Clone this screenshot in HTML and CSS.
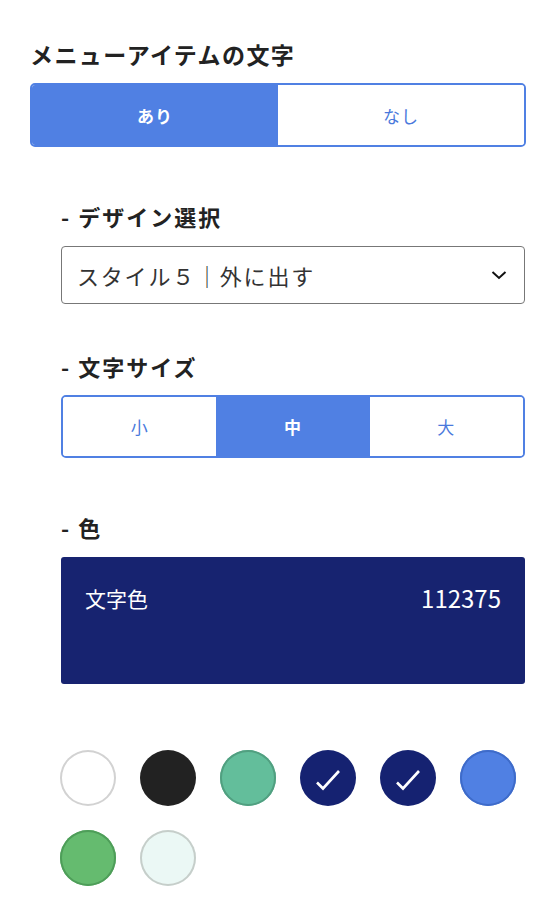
FILE: index.html
```html
<!DOCTYPE html>
<html lang="ja">
<head>
    <meta charset="UTF-8">
    <meta name="viewport" content="width=device-width, initial-scale=1.0">
    <title>メニューアイテムの文字</title>
    <link rel="stylesheet" href="styles.css">
</head>
<body>
    <div class="panel">
        <h2 class="panel-title">メニューアイテムの文字</h2>
        <div class="segmented">
            <button class="segment is-active">あり</button>
            <button class="segment">なし</button>
        </div>

        <div class="sub">
            <h3 class="sub-title">- デザイン選択</h3>
            <div class="select">
                <span class="select-value">スタイル５｜外に出す</span>
                <svg class="select-arrow" width="16" height="10" viewBox="0 0 16 10">
                    <path d="M1.5 2 L8 8 L14.5 2" fill="none" stroke="#111" stroke-width="2"/>
                </svg>
            </div>

            <h3 class="sub-title sub-title-near">- 文字サイズ</h3>
            <div class="segmented segmented-3">
                <button class="segment">小</button>
                <button class="segment is-active">中</button>
                <button class="segment">大</button>
            </div>

            <h3 class="sub-title">- 色</h3>
            <div class="color-preview">
                <span>文字色</span>
                <span class="color-code">112375</span>
            </div>

            <div class="swatches">
                <span class="swatch swatch-white"></span>
                <span class="swatch swatch-black"></span>
                <span class="swatch swatch-teal"></span>
                <span class="swatch swatch-navy">
                    <svg width="56" height="56" viewBox="0 0 56 56"><path d="M17 32.5 L23 38.5 L39 21" fill="none" stroke="#fff" stroke-width="2.6"/></svg>
                </span>
                <span class="swatch swatch-navy">
                    <svg width="56" height="56" viewBox="0 0 56 56"><path d="M17 32.5 L23 38.5 L39 21" fill="none" stroke="#fff" stroke-width="2.6"/></svg>
                </span>
                <span class="swatch swatch-blue"></span>
                <span class="swatch swatch-green"></span>
                <span class="swatch swatch-mint"></span>
            </div>
        </div>
    </div>
</body>
</html>
```

FILE: styles.css
```css
body {
    margin: 0;
    font-family: "Noto Sans CJK JP", "Noto Sans", sans-serif;
    color: #222;
    background: #fff;
}

.panel {
    padding: 39px 22px 20px 30px;
}

/* Headings */
.panel-title {
    margin: 0 0 13px;
    font-size: 23px;
    line-height: 31px;
    font-weight: 700;
    letter-spacing: 1.4px;
}

.sub {
    padding-left: 31px;
    padding-right: 1px;
}

.sub-title {
    margin: 54px 0 15px;
    font-size: 22px;
    line-height: 30px;
    font-weight: 700;
    letter-spacing: 2px;
}

.sub-title-near {
    margin-top: 47px;
    margin-bottom: 14px;
}

/* Segmented toggles */
.segmented {
    display: flex;
    height: 64px;
    border: 2px solid #5080e3;
    border-radius: 5px;
    overflow: hidden;
    box-sizing: border-box;
}

.segmented-3 {
    height: 63px;
}

.segment {
    flex: 1;
    border: none;
    margin: 0;
    padding: 0;
    background: #fff;
    color: #4a79dc;
    font-family: inherit;
    font-size: 17px;
    letter-spacing: 1px;
}

.segment.is-active {
    background: #5080e3;
    color: #fff;
    font-weight: 700;
}

/* Select */
.select {
    display: flex;
    align-items: center;
    justify-content: space-between;
    height: 58px;
    padding: 0 17px 0 15px;
    border: 1.5px solid #777;
    border-radius: 4px;
    box-sizing: border-box;
}

.select-value {
    font-size: 22px;
    color: #333;
    letter-spacing: 1.8px;
}

.select-arrow {
    display: block;
}

/* Color preview */
.color-preview {
    display: flex;
    justify-content: space-between;
    height: 127px;
    padding: 26px 24px 0;
    box-sizing: border-box;
    background: #172370;
    border-radius: 3px;
    color: #fff;
    font-size: 21px;
    line-height: 30px;
}

.color-code {
    font-size: 24px;
}

/* Swatches */
.swatches {
    display: flex;
    flex-wrap: wrap;
    gap: 24px;
    margin-top: 66px;
    margin-left: -1px;
}

.swatch {
    width: 56px;
    height: 56px;
    border-radius: 50%;
    display: flex;
    align-items: center;
    justify-content: center;
}

.swatch svg {
    display: block;
}

.swatch-white { background: #fff; box-shadow: inset 0 0 0 2px #d2d2d2; }
.swatch-black { background: #222; }
.swatch-teal { background: #63be9b; box-shadow: inset 0 0 0 2px #519f80; }
.swatch-navy { background: #152271; }
.swatch-blue { background: #5080e3; box-shadow: inset 0 0 0 2px #3e6bc9; }
.swatch-green { background: #65bb6f; box-shadow: inset 0 0 0 2px #4e9d59; }
.swatch-mint { background: #ebf8f5; box-shadow: inset 0 0 0 2px #c6ceca; }
```
